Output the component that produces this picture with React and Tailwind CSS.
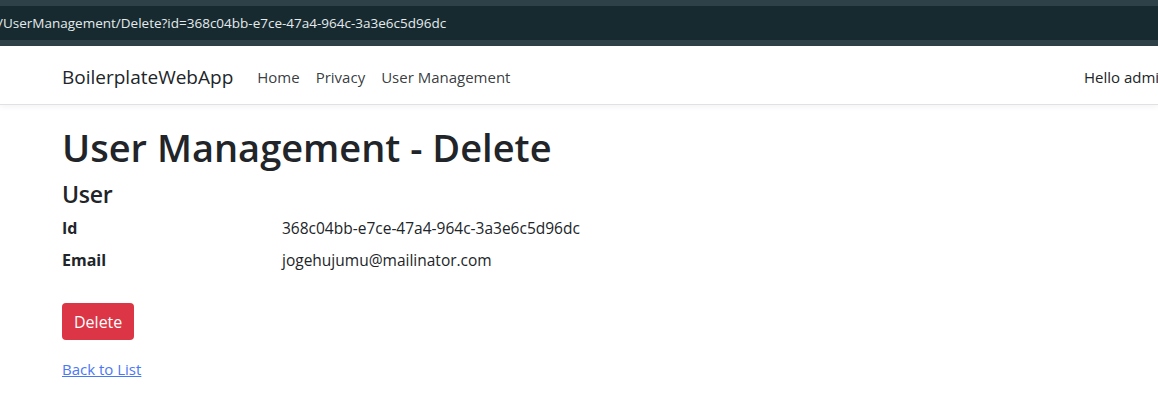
import React from "react";

const NavLink = ({ children }) => (
  <a href="#" className="px-2 text-[15px] text-[#212529]/90 no-underline">
    {children}
  </a>
);

const DetailRow = ({ label, value }) => (
  <div className="flex h-8 items-start">
    <dt className="w-[220px] shrink-0 font-bold">{label}</dt>
    <dd className="text-[15.5px]">{value}</dd>
  </div>
);

export default function App() {
  return (
    <div
      className="w-[1158px] h-[398px] overflow-hidden bg-white text-[#212529]"
      style={{ fontFamily: '"Open Sans", "Noto Sans", sans-serif' }}
    >
      {/* browser address strip */}
      <div className="h-[46px] bg-[#2e4048] py-[6px]">
        <div className="flex h-[34px] items-center bg-[#172a30] text-[13.5px] text-[#e4eaec]">
          <span className="-ml-[2px] whitespace-nowrap">/UserManagement/Delete?id=368c04bb-e7ce-47a4-964c-3a3e6c5d96dc</span>
        </div>
      </div>

      {/* navbar */}
      <header className="flex h-[59px] items-center border-b border-[#dee2e6] bg-white pl-[62px] pt-1 shadow-[0_2px_6px_rgba(0,0,0,0.05)]">
        <a href="#" className="mr-4 text-[19px] text-[#212529]">BoilerplateWebApp</a>
        <nav className="flex">
          <NavLink>Home</NavLink>
          <NavLink>Privacy</NavLink>
          <NavLink>User Management</NavLink>
        </nav>
        <div className="ml-auto w-[74px] overflow-hidden whitespace-nowrap text-[15px]">Hello admin!</div>
      </header>

      <main className="px-[62px] pt-[18px]">
        <h1 className="text-[38px] font-semibold leading-[48px]">User Management - Delete</h1>
        <div className="mt-[9px]">
          <h4 className="text-[23px] font-semibold leading-[29px] tracking-[-0.3px]">User</h4>
          <dl className="mt-[7px] text-[16px] leading-6">
            <DetailRow label="Id" value="368c04bb-e7ce-47a4-964c-3a3e6c5d96dc" />
            <DetailRow label="Email" value="jogehujumu@mailinator.com" />
          </dl>
          <form className="mt-[23px]">
            <button
              type="button"
              className="h-[37px] rounded-[4px] bg-[#dc3545] px-3 text-[16px] text-white"
            >
              Delete
            </button>
          </form>
          <a href="#" className="mt-[18px] inline-block text-[15px] text-[#4a78f5] underline">
            Back to List
          </a>
        </div>
      </main>
    </div>
  );
}
